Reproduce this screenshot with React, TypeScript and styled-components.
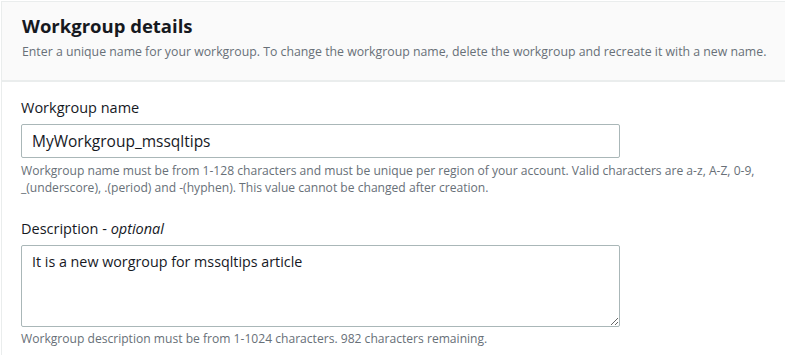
import React from "react";
import styled, { createGlobalStyle } from "styled-components";

const Global = createGlobalStyle`
  html, body { margin: 0; padding: 0; background: #ffffff; }
  body { font-family: "Open Sans", "Noto Sans", Arial, sans-serif; }
  * { box-sizing: border-box; }
`;

const Panel = styled.div`
  margin: 1px;
  width: 784px;
  height: 354px;
  border: 1px solid #eaeded;
  border-right: none;
  border-bottom: none;
  background: #ffffff;
  display: flex;
  flex-direction: column;
`;

const Header = styled.header`
  background: #fafafa;
  border-bottom: 2px solid #eaeded;
  padding: 11px 10px 0 20px;
  height: 80px;
`;

const Title = styled.h2`
  margin: 0;
  font-size: 18.5px;
  font-weight: 700;
  line-height: 26px;
  color: #16191f;
`;

const Subtitle = styled.p`
  margin: 5px 0 0 0;
  font-size: 12.3px;
  line-height: 16px;
  color: #687078;
  white-space: nowrap;
`;

const Body = styled.div`
  padding: 16px 20px 0 19px;
  display: flex;
  flex-direction: column;
  gap: 23px;
`;

const Field = styled.div`
  display: flex;
  flex-direction: column;
`;

const Label = styled.label`
  font-size: 14.5px;
  line-height: 20px;
  color: #16191f;
  margin-bottom: 6px;
  em { font-style: italic; }
`;

const Input = styled.input`
  width: 599px;
  height: 34px;
  border: 1px solid #aab7b8;
  border-radius: 2px;
  padding: 0 10px;
  font-family: inherit;
  font-size: 15.5px;
  color: #16191f;
  background: #fff;
  outline: none;
`;

const TextArea = styled.textarea`
  width: 599px;
  height: 82px;
  border: 1px solid #aab7b8;
  border-radius: 2px;
  padding: 6px 10px;
  font-family: inherit;
  font-size: 14.3px;
  line-height: 20px;
  color: #16191f;
  background: #fff;
  outline: none;
  resize: vertical;
`;

const Help = styled.p<{ $gap?: number }>`
  margin: ${(p) => p.$gap ?? 4}px 0 0 0;
  font-size: 12.1px;
  line-height: 17px;
  color: #687078;
`;

export default function App() {
  return (
    <>
      <Global />
      <Panel>
        <Header>
          <Title>Workgroup details</Title>
          <Subtitle>
            Enter a unique name for your workgroup. To change the workgroup name, delete the workgroup and recreate it with a new name.
          </Subtitle>
        </Header>
        <Body>
          <Field>
            <Label>Workgroup name</Label>
            <Input readOnly value="MyWorkgroup_mssqltips" />
            <Help>
              Workgroup name must be from 1-128 characters and must be unique per region of your account. Valid characters are a-z, A-Z, 0-9,
              <br />
              _(underscore), .(period) and -(hyphen). This value cannot be changed after creation.
            </Help>
          </Field>
          <Field>
            <Label>
              Description - <em>optional</em>
            </Label>
            <TextArea readOnly value="It is a new worgroup for mssqltips article" />
            <Help $gap={3}>Workgroup description must be from 1-1024 characters. 982 characters remaining.</Help>
          </Field>
        </Body>
      </Panel>
    </>
  );
}
